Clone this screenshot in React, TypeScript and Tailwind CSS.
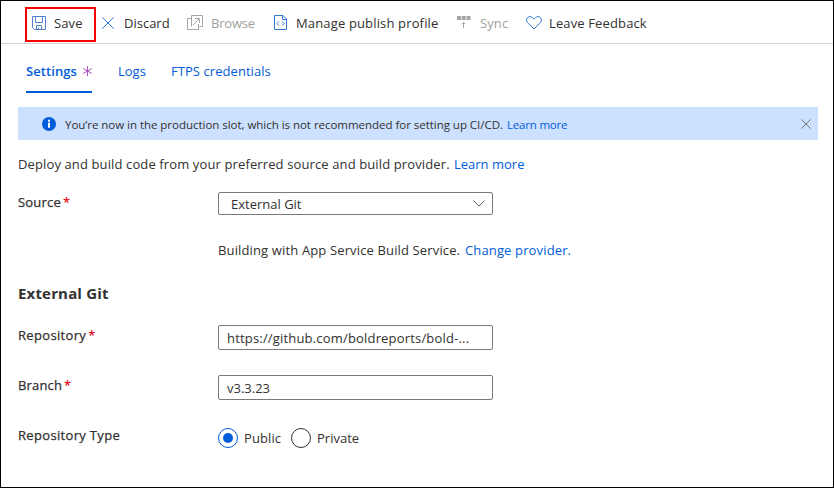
import type { ReactNode } from "react";

const Link = ({ children, className = "" }: { children: ReactNode; className?: string }) => (
  <a className={`text-[#015cda] ${className}`}>{children}</a>
);

function SaveIcon() {
  return (
    <svg className="h-[14px] w-[14px]" viewBox="0 0 14 14" fill="none" stroke="#4f80d0">
      <path d="M.5 .5h13v13h-11l-2-2zM3.500 .5v6h7v-6M4.500 13.500v-4h5v4M6.500 11.500v2" />
    </svg>
  );
}

function Cross({ className }: { className: string }) {
  return (
    <svg className={className} viewBox="0 0 12 12" fill="none" stroke="currentColor">
      <path d="M.4 .4l11.200 11.200M11.600 .4L.4 11.600" />
    </svg>
  );
}

function BrowseIcon() {
  return (
    <svg className="h-[15px] w-[16px]" viewBox="0 0 16 15" fill="none" stroke="#a6a5a4">
      <path d="M4.500 11.500v-11h11v11h-3M4.500 3.500h-4v11h11V9M6 10l6-6M8 3.500h4.500V8" />
    </svg>
  );
}

function ProfileIcon() {
  return (
    <svg className="h-[15px] w-[13px]" viewBox="0 0 13 15" fill="none" stroke="#2f78d6">
      <path d="M.5 .5h8.500l3.500 3.500v10.500H.5zM8.500 .5v4h4" />
      <path d="M4.800 6.500L2.800 8.500l2 2M8.200 6.500l2 2-2 2" />
    </svg>
  );
}

function SyncIcon() {
  return (
    <svg className="h-[13px] w-[14px]" viewBox="0 0 14 13" fill="#a6a5a4">
      <path d="M0 0h4v4H0zM4.700 0h4v4h-4zM9.500 0h4v4h-4z" />
      <path d="M6.500 12V6.500M4.500 8.300l2-2 2 2" fill="none" stroke="#a6a5a4" />
    </svg>
  );
}

function HeartIcon() {
  return (
    <svg className="h-[14px] w-[16px]" viewBox="0 0 16 14" fill="none" stroke="#2f78d6">
      <path d="M8 13L1.700 6.800C.2 5.200.2 3 1.500 1.700 3 .2 5.200.3 6.600 1.700L8 3.100l1.400-1.400C10.800.3 13 .2 14.500 1.700c1.300 1.300 1.300 3.500-.2 5.100z" />
    </svg>
  );
}

function Tool({ icon, iconBox, textBox, children }: { icon: ReactNode; iconBox: string; textBox: string; children: ReactNode }) {
  return (
    <div className="flex h-full shrink-0 items-center">
      <div className={`flex shrink-0 ${iconBox}`}>{icon}</div>
      <span className={`shrink-0 pt-px ${textBox}`}>{children}</span>
    </div>
  );
}

function Row({ label, labelClass, required, className, children }: { label: string; labelClass: string; required?: boolean; className: string; children: ReactNode }) {
  return (
    <div className={`flex ${className}`}>
      <div className="w-[200px] shrink-0 pt-px">
        <span className={`[-webkit-text-stroke:0.25px] ${labelClass}`}>{label}</span>
        {required && <span className="ml-[2px] font-semibold text-[#e81123]">*</span>}
      </div>
      {children}
    </div>
  );
}

export default function App() {
  return (
    <div className="flex h-[488px] w-[834px] flex-col overflow-hidden border border-black bg-white font-['Open_Sans','Noto_Sans',sans-serif] text-[13px] leading-[18px] whitespace-nowrap text-[#323130]">
      <header className="flex h-[43px] shrink-0 items-center border-b border-[#d2d0ce] pt-px pl-[24px]">
        <div className="mt-[4px] flex h-[35px] w-[71px] shrink-0 items-center border-2 border-[#f80000] pl-[5px]">
          <div className="-mt-[4px] flex items-center">
            <SaveIcon />
            <span className="ml-[8px] pt-px tracking-[0.1px]">Save</span>
          </div>
        </div>
        <Tool icon={<Cross className="h-[12px] w-[12px] text-[#2f78d6]" />} iconBox="ml-[6px] w-[22px]" textBox="w-[63px]">Discard</Tool>
        <div className="text-[#a19f9d]">
          <Tool icon={<BrowseIcon />} iconBox="w-[24px]" textBox="w-[63px] tracking-[-0.2px]">Browse</Tool>
        </div>
        <Tool icon={<ProfileIcon />} iconBox="w-[22px]" textBox="w-[161px] tracking-[0.15px]">Manage publish profile</Tool>
        <div className="text-[#a19f9d]">
          <Tool icon={<SyncIcon />} iconBox="w-[23px]" textBox="w-[46px] tracking-[0.1px]">Sync</Tool>
        </div>
        <Tool icon={<HeartIcon />} iconBox="w-[23px]" textBox="tracking-[0.13px]">Leave Feedback</Tool>
      </header>

      <nav className="flex h-[63px] shrink-0 pt-[18px] pl-[25px] text-[#015cda]">
        <div className="mr-[26px] flex h-[31px] w-[66px] justify-between border-b-2 border-[#015cda] font-semibold">
          <span className="tracking-[0.07px]">Settings</span>
          <svg className="mt-[4px] h-[10px] w-[10px]" viewBox="0 0 10 10" fill="none" stroke="#a94fc0">
            <path d="M5.500 0v10M1.200 2.500l8.600 5M9.800 2.500l-8.600 5" />
          </svg>
        </div>
        <span className="w-[53px]">Logs</span>
        <span className="tracking-[0.06px]">FTPS credentials</span>
      </nav>

      <div className="mr-[15px] ml-[17px] flex h-[33px] shrink-0 items-center bg-[#cce0ff] pr-[7px] pl-[24px] text-[11.500px]">
        <svg className="mr-[9px] h-[14px] w-[14px] shrink-0" viewBox="0 0 14 14">
          <circle cx="7" cy="7" r="7" fill="#015cda" />
          <path d="M6 5.800h2v5H6zM6 2.800h2v2H6z" fill="#fff" />
        </svg>
        <span className="w-[442px] pt-[2px] tracking-[-0.03px]">You’re now in the production slot, which is not recommended for setting up CI/CD.</span>
        <Link className="pt-[2px] tracking-[-0.2px]">Learn more</Link>
        <Cross className="ml-auto h-[10px] w-[10px] text-[#605e5c]" />
      </div>

      <main className="flex flex-col pl-[17px]">
        <p className="mt-[15px] flex">
          <span className="w-[436px] tracking-[0.12px]">Deploy and build code from your preferred source and build provider.</span>
          <Link>Learn more</Link>
        </p>

        <Row label="Source" labelClass="tracking-[0.2px]" required className="mt-[19px] h-[24px]">
          <div className="flex h-[23px] w-[275px] items-center justify-between rounded-[2px] border border-[#7a7978] pr-[7px] pl-[12px]">
            <span className="pt-px">External Git</span>
            <svg className="h-[7px] w-[12px]" viewBox="0 0 12 7" fill="none" stroke="#605e5c">
              <path d="M.5 .5L6 6l5.500-5.500" />
            </svg>
          </div>
        </Row>

        <p className="mt-[25px] ml-[200px] flex">
          <span className="w-[247px] tracking-[0.14px]">Building with App Service Build Service.</span>
          <Link className="tracking-[0.14px]">Change provider.</Link>
        </p>

        <h2 className="mt-[24px] text-[15px] leading-[20px] font-bold tracking-[0.17px]">External Git</h2>

        <Row label="Repository" labelClass="tracking-[0.33px]" required className="mt-[22px] h-[25px]">
          <div className="flex h-[25px] w-[275px] items-center rounded-[2px] border border-[#7a7978] pl-[8px]">
            <span className="tracking-[0.18px]">https://github.com/boldreports/bold-...</span>
          </div>
        </Row>
        <Row label="Branch" labelClass="tracking-[0.15px]" required className="mt-[25px] h-[25px]">
          <div className="flex h-[25px] w-[275px] items-center rounded-[2px] border border-[#7a7978] pl-[8px]">
            <span>v3.3.23</span>
          </div>
        </Row>
        <Row label="Repository Type" labelClass="tracking-[0.33px]" className="mt-[25px] h-[25px]">
          <div className="mt-[3px] flex h-[20px] items-center">
            <span className="flex h-[20px] w-[20px] items-center justify-center rounded-full border border-[#015cda]">
              <span className="h-[10px] w-[10px] rounded-full bg-[#015cda]" />
            </span>
            <span className="ml-[6px] w-[47px] tracking-[0.1px]">Public</span>
            <span className="h-[20px] w-[20px] rounded-full border border-[#323130]" />
            <span className="ml-[6px]">Private</span>
          </div>
        </Row>
      </main>
    </div>
  );
}
